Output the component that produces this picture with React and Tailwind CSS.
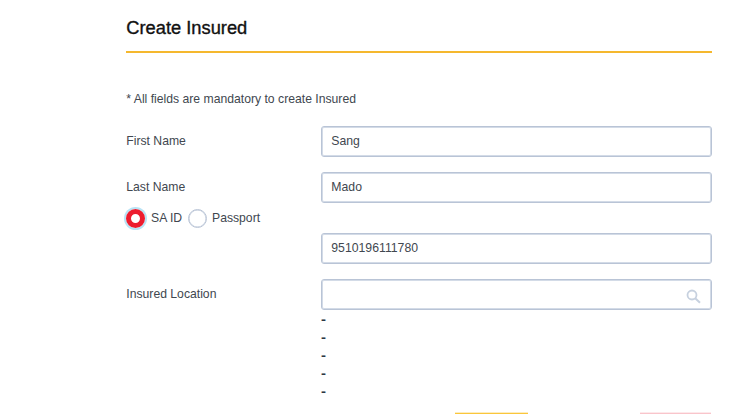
import React from 'react';

function Field({ value, children }) {
  return (
    <div className="flex h-[31px] w-[391px] items-center justify-between rounded-[3px] border border-[#b9c4d6] pl-[9.5px] pr-[10px] text-[12.25px] text-[#41474f] shadow-[inset_0_0_0_1px_#d3dbe7]">
      <span>{value}</span>
      {children}
    </div>
  );
}

function Row({ label, value, children }) {
  return (
    <div className="flex h-[31px] items-center">
      <span className="w-[194.5px] shrink-0">{label}</span>
      <Field value={value}>{children}</Field>
    </div>
  );
}

function Dash() {
  return <span className="h-[18.2px] origin-left scale-x-[1.2] leading-[18px]">-</span>;
}

export default function App() {
  return (
    <main className="h-[414px] w-[753px] overflow-hidden bg-white pl-[126.3px] font-['Liberation_Sans',Arial,sans-serif] text-[12.2px] text-[#41474f]">
      <div className="w-[585.7px]">
        <header className="h-[53px] border-b-2 border-[#f5b82e] pt-[16px]">
          <h1 className="text-[18.3px] leading-6 text-[#111] [-webkit-text-stroke:0.35px_#111]">Create Insured</h1>
        </header>
        <p className="mt-[38px] h-[35px] leading-4">* All fields are mandatory to create Insured</p>
        <div className="flex flex-col gap-[15px]">
          <Row label="First Name" value="Sang" />
          <Row label="Last Name" value="Mado" />
        </div>
        <div className="-ml-[0.3px] flex h-[30px] items-center">
          <span className="size-[19px] rounded-full border-[5px] border-[#ed1c2e] shadow-[0_0_0_2px_#b9e3f5]" />
          <span className="ml-[6px] w-[36.5px]">SA ID</span>
          <span className="size-[19px] rounded-full border border-[#b9c4d6] shadow-[inset_0_0_0_0.5px_#b9c4d6]" />
          <span className="ml-[5.5px]">Passport</span>
        </div>
        <div className="flex flex-col gap-[15px]">
          <Row value="9510196111780" />
          <Row label="Insured Location">
            <svg className="mt-[4px] size-[15px]" viewBox="0 0 15 15" fill="none" stroke="#c7d1df">
              <circle cx="6" cy="6" r="4.5" strokeWidth="1.8" />
              <path d="M9.2 9.2L14 13.7" strokeWidth="2" />
            </svg>
          </Row>
        </div>
        <div className="ml-[194.7px] mt-[0.5px] flex h-[91px] flex-col text-[12.5px] font-bold text-[#2c3644]">
          <Dash />
          <Dash />
          <Dash />
          <Dash />
          <Dash />
        </div>
        <div className="mt-[10.5px] ml-[329px] flex justify-between pr-[1px]">
          <span className="h-[20px] w-[73px] border-t border-[#fdedc0] bg-[#fac63c]" />
          <span className="h-[20px] w-[71px] border-t border-[#fde9eb] bg-[#f9c5cb]" />
        </div>
      </div>
    </main>
  );
}
